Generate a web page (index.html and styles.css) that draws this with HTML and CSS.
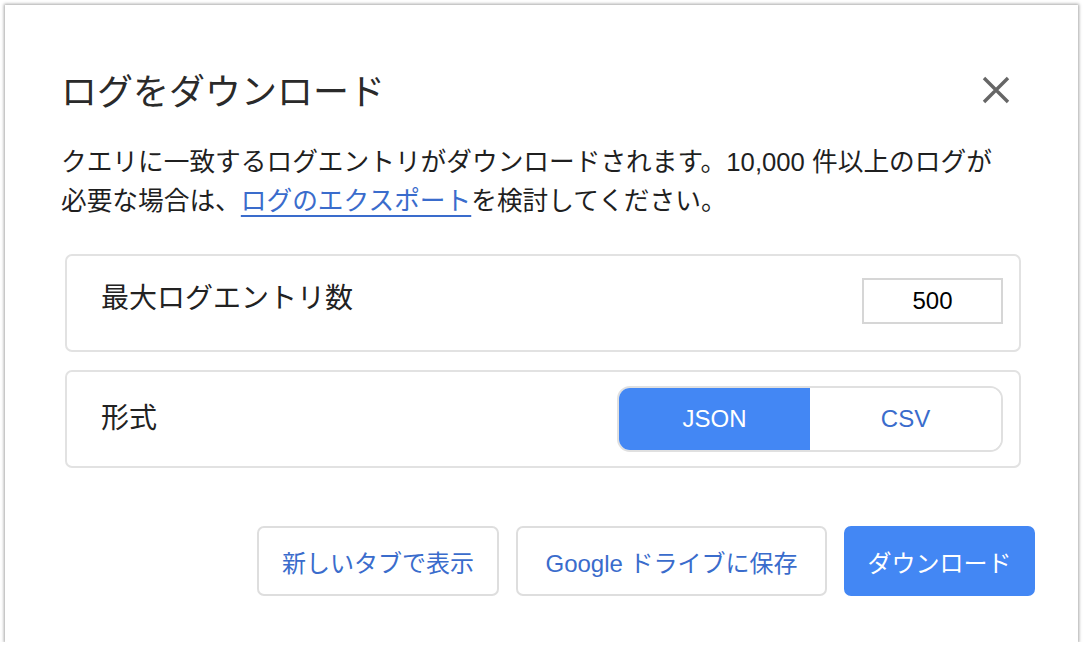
FILE: index.html
```html
<!DOCTYPE html>
<html lang="ja">
<head>
<meta charset="utf-8">
<title>ログをダウンロード</title>
<link rel="stylesheet" href="styles.css">
</head>
<body>
<div class="dialog">
  <div class="title-row">
    <h1 class="title">ログをダウンロード</h1>
    <button class="close" aria-label="閉じる">
      <svg width="28" height="28" viewBox="0 0 28 28"><path d="M2 2 L26 26 M26 2 L2 26" stroke="#666" stroke-width="3.4" fill="none"/></svg>
    </button>
  </div>
  <p class="desc">クエリに一致するログエントリがダウンロードされます。10,000 件以上のログが<br>必要な場合は、<a class="link" href="#">ログのエクスポート</a>を検討してください。</p>
  <div class="card">
    <span class="label label-max">最大ログエントリ数</span>
    <input class="num" type="text" value="500">
  </div>
  <div class="card card-format">
    <span class="label label-format">形式</span>
    <div class="segment">
      <span class="seg seg-active">JSON</span>
      <span class="seg">CSV</span>
    </div>
  </div>
  <div class="actions">
    <button class="btn btn-tab">新しいタブで表示</button>
    <button class="btn btn-drive">Google ドライブに保存</button>
    <button class="btn btn-primary">ダウンロード</button>
  </div>
</div>
</body>
</html>
```
FILE: styles.css
```css
html, body {
  margin: 0;
  padding: 0;
  background: #ffffff;
}
body {
  font-family: "Liberation Sans", "Noto Sans CJK JP", sans-serif;
  color: #212121;
}
.dialog {
  box-sizing: border-box;
  margin: 5px 0 0 5px;
  width: 1073px;
  height: 637px;
  background: #fff;
  box-shadow: 0 0 3px 1px rgba(0, 0, 0, 0.35);
  padding: 66px 57px 0 60px;
}
.title-row {
  display: flex;
  align-items: center;
  justify-content: space-between;
  height: 44px;
  margin-right: 11px;
}
.title {
  margin: 0 0 0 -4px;
  font-size: 36px;
  line-height: 44px;
  font-weight: normal;
  color: #2a2a2a;
}
.close {
  border: 0;
  background: none;
  padding: 0;
  width: 28px;
  height: 28px;
  display: flex;
  margin-bottom: 6px;
}
.desc {
  margin: 28px 0 0 -4px;
  font-size: 25.7px;
  line-height: 39px;
  color: #1f1f1f;
}
.link {
  color: #3a6ccc;
  text-decoration: underline;
  text-decoration-thickness: 2px;
  text-underline-offset: 5px;
}
.card {
  box-sizing: border-box;
  margin-top: 33px;
  height: 98px;
  border: 2px solid #e2e2e2;
  border-radius: 7px;
  display: flex;
  align-items: center;
  justify-content: space-between;
  padding: 0 16px 0 34px;
}
.card-format {
  margin-top: 18px;
}
.label {
  font-size: 28px;
  line-height: 34px;
  color: #222;
}
.label-max {
  margin-bottom: 9px;
}
.label-format {
  margin-bottom: 0;
}
.num {
  box-sizing: border-box;
  width: 141px;
  height: 46px;
  border: 2px solid #d6d6d6;
  border-radius: 0;
  font-family: "Liberation Sans", sans-serif;
  font-size: 24px;
  text-align: center;
  color: #000;
  padding: 0;
  margin-bottom: 4px;
  outline: none;
}
.segment {
  box-sizing: border-box;
  width: 386px;
  height: 66px;
  border: 2px solid #e0e0e0;
  border-radius: 13px;
  overflow: hidden;
  display: flex;
}
.seg {
  flex: 1;
  display: flex;
  align-items: center;
  justify-content: center;
  font-size: 24px;
  color: #3a6ccc;
  background: #fff;
}
.seg-active {
  background: #4387f4;
  color: #fff;
}
.actions {
  display: flex;
  justify-content: flex-end;
  gap: 17px;
  margin-top: 58px;
  margin-right: -14px;
}
.btn {
  box-sizing: border-box;
  height: 70px;
  border: 2px solid #dedede;
  border-radius: 7px;
  background: #fff;
  color: #3a6ccc;
  font-family: "Liberation Sans", "Noto Sans CJK JP", sans-serif;
  font-size: 24px;
  padding: 0;
}
.btn-tab {
  width: 242px;
}
.btn-drive {
  width: 311px;
}
.btn-primary {
  width: 191px;
  background: #4387f4;
  border-color: #4387f4;
  color: #fff;
}
```
